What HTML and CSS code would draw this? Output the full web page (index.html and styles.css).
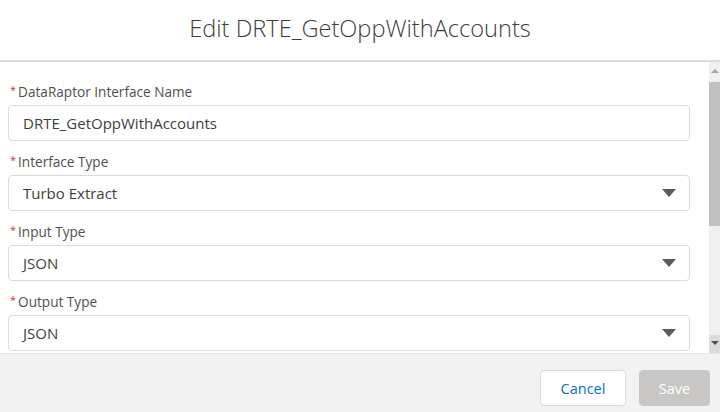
FILE: index.html
```html
<!DOCTYPE html>
<html lang="en">
<head>
<meta charset="utf-8">
<title>Edit DRTE_GetOppWithAccounts</title>
<link rel="stylesheet" href="styles.css">
</head>
<body>
<div class="modal">
  <header class="modal-header">
    <h2 class="modal-title">Edit DRTE_GetOppWithAccounts</h2>
  </header>
  <div class="modal-body">
    <div class="modal-content">
      <div class="field">
        <label class="field-label"><abbr class="req">*</abbr>DataRaptor Interface Name</label>
        <div class="input">DRTE_GetOppWithAccounts</div>
      </div>
      <div class="field">
        <label class="field-label"><abbr class="req">*</abbr>Interface Type</label>
        <div class="input select">Turbo Extract<span class="caret"></span></div>
      </div>
      <div class="field">
        <label class="field-label"><abbr class="req">*</abbr>Input Type</label>
        <div class="input select">JSON<span class="caret"></span></div>
      </div>
      <div class="field">
        <label class="field-label"><abbr class="req">*</abbr>Output Type</label>
        <div class="input select">JSON<span class="caret"></span></div>
      </div>
    </div>
    <div class="scrollbar">
      <div class="sb-btn sb-up"><span class="sb-tri-up"></span></div>
      <div class="sb-track">
        <div class="sb-thumb"></div>
      </div>
      <div class="sb-btn sb-down"><span class="sb-tri-down"></span></div>
    </div>
  </div>
  <footer class="modal-footer">
    <button class="btn btn-neutral">Cancel</button>
    <button class="btn btn-disabled">Save</button>
  </footer>
</div>
</body>
</html>
```
FILE: styles.css
```css
html, body {
  margin: 0;
  padding: 0;
  width: 720px;
  height: 412px;
  overflow: hidden;
  background: #ffffff;
  font-family: "Open Sans", "Liberation Sans", sans-serif;
}

.modal {
  display: flex;
  flex-direction: column;
  width: 720px;
  height: 412px;
}

.modal-header {
  height: 60px;
  border-bottom: 2px solid #dddbda;
  display: flex;
  align-items: center;
  justify-content: center;
  flex: none;
}

.modal-title {
  margin: 0;
  font-weight: 300;
  font-size: 23.6px;
  color: #3e3e3c;
  position: relative;
  top: -2px;
}

.modal-body {
  height: 291px;
  display: flex;
  flex: none;
}

.modal-content {
  flex: 1;
  padding: 19px 19px 0 8px;
  display: flex;
  flex-direction: column;
  gap: 10px;
  overflow: hidden;
}

.field {
  display: flex;
  flex-direction: column;
  gap: 4px;
}

.field-label {
  display: flex;
  align-items: center;
  height: 20px;
  font-size: 13.6px;
  color: #514f4d;
  padding-left: 2px;
}

.req {
  color: #c23934;
  text-decoration: none;
  font-size: 11px;
  margin-right: 2px;
  position: relative;
  top: -2px;
}

.input {
  height: 34px;
  border: 1px solid #dddbda;
  border-radius: 4px;
  display: flex;
  align-items: center;
  padding: 0 14px;
  font-size: 15px;
  color: #3e3e3c;
  background: #fff;
}

.select {
  justify-content: space-between;
}

.caret {
  width: 0;
  height: 0;
  border-left: 7px solid transparent;
  border-right: 7px solid transparent;
  border-top: 8px solid #5c5b59;
  margin-right: -1px;
}

.scrollbar {
  width: 11px;
  flex: none;
  display: flex;
  flex-direction: column;
  background: #f0f0f0;
}

.sb-btn {
  height: 18px;
  display: flex;
  align-items: center;
  justify-content: center;
  flex: none;
}

.sb-down {
  background: #dcdcdc;
}

.sb-tri-up {
  width: 0;
  height: 0;
  border-left: 4px solid transparent;
  border-right: 4px solid transparent;
  border-bottom: 4px solid #a3a3a3;
}

.sb-tri-down {
  width: 0;
  height: 0;
  border-left: 4px solid transparent;
  border-right: 4px solid transparent;
  border-top: 4px solid #505050;
  margin-top: -3px;
}

.sb-track {
  flex: 1;
  padding-top: 2px;
}

.sb-thumb {
  height: 144px;
  background: #c1c1c1;
}

.modal-footer {
  flex: 1;
  background: #f3f2f2;
  border-top: 1px solid #e5e5e5;
  display: flex;
  justify-content: flex-end;
  align-items: flex-start;
  padding: 16px 10px 0 0;
  gap: 13px;
}

.btn {
  height: 36px;
  border-radius: 4px;
  font-family: "Open Sans", "Liberation Sans", sans-serif;
  font-size: 14.5px;
  padding: 0;
  cursor: pointer;
}

.btn-neutral {
  width: 86px;
  background: #ffffff;
  border: 1px solid #dddbda;
  color: #0070d2;
}

.btn-disabled {
  width: 71px;
  background: #c9c7c5;
  border: 1px solid #c9c7c5;
  color: #ffffff;
}
```
